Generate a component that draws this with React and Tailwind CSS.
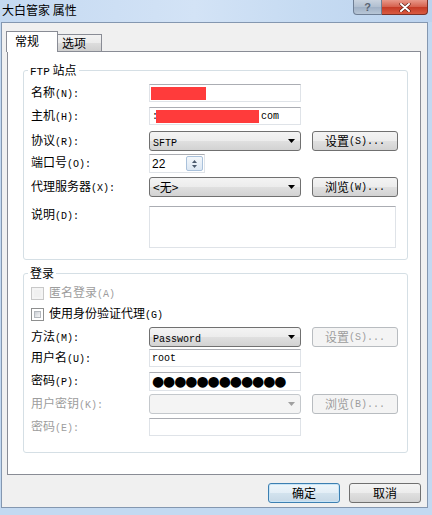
import React from "react";

const MONO = "font-['Liberation_Mono',monospace] text-[10px]";

function Lbl({ c, k, dis, suffix = ":" }) {
  return (
    <span className={dis ? "text-[#9d9d9d]" : "text-black"}>
      {c}
      <span className={MONO}>({k}){suffix}</span>
    </span>
  );
}

function Arrow({ dis }) {
  return (
    <svg width="7" height="4" viewBox="0 0 7 4">
      <path d="M0 0H7L3.5 4Z" fill={dis ? "#a0a0a0" : "#000"} />
    </svg>
  );
}

function Select({ children, dis }) {
  return (
    <div
      className={
        "w-[152px] h-full rounded-[3px] border flex items-center justify-between pl-[3px] pr-[5px] " +
        (dis
          ? "border-[#c4c8cc] bg-[#f4f4f4]"
          : "border-[#707070] bg-[linear-gradient(#f4f4f4,#ececec_50%,#e0e0e0_50%,#d2d2d2)]")
      }
    >
      <span>{children}</span>
      <Arrow dis={dis} />
    </div>
  );
}

function Input({ children, w = "w-[152px]" }) {
  return (
    <div
      className={
        w +
        " h-full bg-white border border-[#dfe3e8] border-t-[#abadb3] flex items-center pl-[2px] overflow-hidden"
      }
    >
      {children}
    </div>
  );
}

function Btn({ children, dis, def, w = "w-[86px]" }) {
  let cls = "h-full rounded-[3px] border flex items-center justify-center ";
  if (dis) cls += "border-[#b8bcc0] bg-[#f4f4f4] text-[#9d9d9d]";
  else if (def)
    cls +=
      "border-[#3c7fb1] bg-[linear-gradient(#eef6fb,#e3eef6_50%,#d3e3ee_50%,#c6d8e6)] shadow-[inset_0_0_0_1px_#c8e4f6]";
  else cls += "border-[#707070] bg-[linear-gradient(#f4f4f4,#ececec_50%,#e0e0e0_50%,#d2d2d2)]";
  return <div className={w + " " + cls}>{children}</div>;
}

function Row({ mt, h, label, children, top }) {
  return (
    <div className={"flex " + mt + " " + h + (top ? " items-start" : " items-center")}>
      <div className="w-[118px] shrink-0 leading-[16px]">{label}</div>
      {children}
    </div>
  );
}

function Check({ dis, label }) {
  return (
    <div className="flex items-center h-[13px] gap-[5px]">
      <div
        className={
          "w-[13px] h-[13px] border p-[2px] " +
          (dis ? "border-[#c8c8c8] bg-[#f4f4f4]" : "border-[#8e8f8f] bg-white")
        }
      >
        <div
          className={
            "w-full h-full " +
            (dis
              ? "bg-[#f0f0f0]"
              : "bg-[linear-gradient(135deg,#cbcfd5,#f6f6f6)] border border-[#b4b8bd]")
          }
        />
      </div>
      <span className={"leading-[16px] " + (dis ? "text-[#9d9d9d]" : "text-black")}>{label}</span>
    </div>
  );
}

function Group({ title, mt, h, children }) {
  return (
    <div className={"relative ml-[15px] w-[385px] border border-[#d5dfe5] rounded-[3px] pl-[7px] " + mt + " " + h}>
      <div className="absolute left-[4px] top-[-9px] bg-white px-[2px] leading-[16px]">{title}</div>
      {children}
    </div>
  );
}

export default function App() {
  return (
    <div className="w-[432px] h-[515px] overflow-hidden bg-[#c3d9f1] flex flex-col font-['Noto_Sans_CJK_SC','Noto_Sans',sans-serif] text-[12px] text-black">
      {/* title bar */}
      <div className="h-[22px] shrink-0 flex items-start justify-between bg-[linear-gradient(90deg,#c4d9f1,#d3e3f6_45%,#c6dbf2_70%,#bcd3ee)]">
        <span className="pl-[2px] pt-[2px] leading-[16px]">大白管家 属性</span>
        <div className="flex mr-[4px]">
          <div className="w-[29px] h-[15px] rounded-bl-[4px] border border-t-0 border-[#6f7f95] bg-[linear-gradient(#c9d3df,#b1bfd0_50%,#9fb0c5_50%,#b8c6d6)] flex items-center justify-center">
            <span className="font-['Liberation_Sans',sans-serif] font-bold text-[11px] leading-[11px] text-[#5a6473]">?</span>
          </div>
          <div className="w-[46px] h-[15px] rounded-br-[4px] border border-l-0 border-t-0 border-[#7a3128] bg-[linear-gradient(#e8998a,#d5604c_50%,#c43a25_50%,#d95a40)] flex items-center justify-center">
            <svg width="12" height="9" viewBox="0 0 12 9">
              <path d="M2 1L10 8M10 1L2 8" stroke="#5a1a10" strokeWidth="3.2" strokeLinecap="round" />
              <path d="M2 1L10 8M10 1L2 8" stroke="#fff" strokeWidth="2" strokeLinecap="round" />
            </svg>
          </div>
        </div>
      </div>

      {/* content */}
      <div className="flex-1 ml-[1px] mr-[4px] mb-[7px] bg-[#f0f0f0] border border-[#8497b0] pt-[8px]">
        {/* tabs */}
        <div className="flex items-end h-[20px] ml-[4px]">
          <div className="relative z-10 -mb-[1px] w-[52px] h-[21px] bg-white border border-b-0 border-[#898c95] pl-[8px] pt-[1px] leading-[16px]">
            常规
          </div>
          <div className="w-[44px] h-[17px] border border-l-0 border-b-0 border-[#898c95] bg-[linear-gradient(#f2f2f2,#ebebeb_50%,#dddddd_50%,#cfcfcf)] pl-[4px] leading-[16px]">
            选项
          </div>
        </div>

        {/* panel */}
        <div className="ml-[5px] w-[414px] h-[424px] bg-white border border-[#898c95] flex flex-col">
          <Group
            title={
              <span>
                <span className={MONO + " text-[11px]"}>FTP</span> 站点
              </span>
            }
            mt="mt-[18px]"
            h="h-[190px]"
          >
            <Row mt="mt-[13px]" h="h-[18px]" label={<Lbl c="名称" k="N" />}>
              <Input>
                <span className="w-[55px] h-[13px] bg-[#ff3b3b] -ml-[1px]" />
              </Input>
            </Row>
            <Row mt="mt-[5px]" h="h-[18px]" label={<Lbl c="主机" k="H" />}>
              <Input>
                <span className={MONO + " w-[4px]"}>:</span>
                <span className="w-[103px] h-[13px] bg-[#ff3b3b]" />
                <span className={MONO + " ml-[2px]"}>com</span>
              </Input>
            </Row>
            <Row mt="mt-[6px]" h="h-[20px]" label={<Lbl c="协议" k="R" />}>
              <Select>
                <span className={MONO}>SFTP</span>
              </Select>
              <div className="ml-[11px] h-full">
                <Btn>
                  设置<span className={MONO}>(S)...</span>
                </Btn>
              </div>
            </Row>
            <Row mt="mt-[3px]" h="h-[19px]" label={<Lbl c="端口号" k="O" />}>
              <div className="w-[56px] h-full bg-white border border-[#dfe3e8] border-t-[#abadb3] flex items-center justify-between pl-[2px] pr-[1px]">
                <span className="font-['Liberation_Sans',sans-serif] text-[12px]">22</span>
                <div className="w-[17px] h-[15px] border border-[#a9c1db] rounded-[2px] bg-[linear-gradient(#f3f7fb,#dce7f3)] flex flex-col items-center justify-center gap-[2px]">
                  <svg width="5" height="3" viewBox="0 0 5 3">
                    <path d="M0 3L2.5 0L5 3Z" fill="#4b5a6e" />
                  </svg>
                  <svg width="5" height="3" viewBox="0 0 5 3">
                    <path d="M0 0H5L2.5 3Z" fill="#4b5a6e" />
                  </svg>
                </div>
              </div>
            </Row>
            <Row mt="mt-[4px]" h="h-[20px]" label={<Lbl c="代理服务器" k="X" />}>
              <Select>&lt;无&gt;</Select>
              <div className="ml-[11px] h-full">
                <Btn>
                  浏览<span className={MONO}>(W)...</span>
                </Btn>
              </div>
            </Row>
            <Row mt="mt-[9px]" h="h-[42px]" top label={<Lbl c="说明" k="D" />}>
              <div className="w-[247px] h-full bg-white border border-[#dfe3e8] border-t-[#abadb3]" />
            </Row>
          </Group>

          <Group title="登录" mt="mt-[13px]" h="h-[180px]">
            <div className="mt-[13px]">
              <Check dis label={<Lbl c="匿名登录" k="A" suffix="" dis />} />
            </div>
            <div className="mt-[8px]">
              <Check label={<Lbl c="使用身份验证代理" k="G" suffix="" />} />
            </div>
            <Row mt="mt-[6px]" h="h-[20px]" label={<Lbl c="方法" k="M" />}>
              <Select>
                <span className={MONO}>Password</span>
              </Select>
              <div className="ml-[11px] h-full">
                <Btn dis>
                  设置<span className={MONO}>(S)...</span>
                </Btn>
              </div>
            </Row>
            <Row mt="mt-[2px]" h="h-[18px]" label={<Lbl c="用户名" k="U" />}>
              <Input>
                <span className={MONO}>root</span>
              </Input>
            </Row>
            <Row mt="mt-[5px]" h="h-[19px]" label={<Lbl c="密码" k="P" />}>
              <Input>
                <span className="font-['DejaVu_Sans',sans-serif] text-[14px] leading-[15px] tracking-[-1.1px]">
                  ●●●●●●●●●●●●
                </span>
              </Input>
            </Row>
            <Row mt="mt-[3px]" h="h-[20px]" label={<Lbl c="用户密钥" k="K" dis />}>
              <Select dis />
              <div className="ml-[11px] h-full">
                <Btn dis>
                  浏览<span className={MONO}>(B)...</span>
                </Btn>
              </div>
            </Row>
            <Row mt="mt-[4px]" h="h-[18px]" label={<Lbl c="密码" k="E" dis />}>
              <Input />
            </Row>
          </Group>
        </div>

        {/* bottom buttons */}
        <div className="ml-[5px] w-[414px] mt-[8px] h-[20px] flex justify-end gap-[9px]">
          <Btn def w="w-[72px]">确定</Btn>
          <Btn w="w-[72px]">取消</Btn>
        </div>
      </div>
    </div>
  );
}
